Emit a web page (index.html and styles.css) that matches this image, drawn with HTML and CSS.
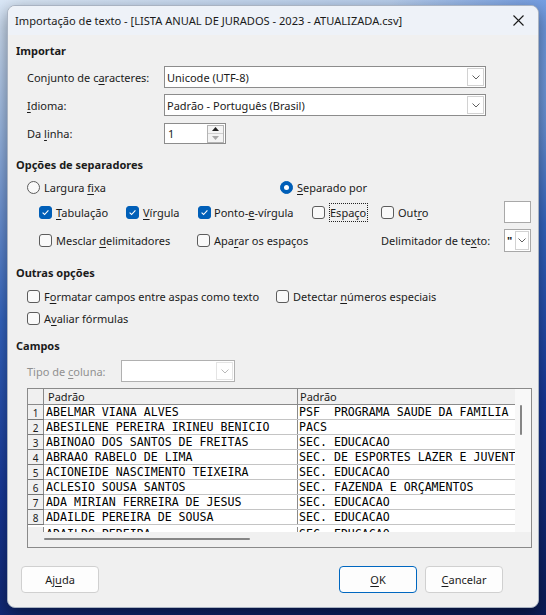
FILE: index.html
```html
<!DOCTYPE html>
<html lang="pt-BR">
<head>
<meta charset="utf-8">
<title>Importação de texto</title>
<link rel="stylesheet" href="styles.css">
</head>
<body>
<div class="window">
  <div class="titlebar">
    <span class="title">Importação de texto - [LISTA ANUAL DE JURADOS - 2023 - ATUALIZADA.csv]</span>
    <span class="close"><svg width="11" height="11" viewBox="0 0 11 11"><path d="M0.5 0.5L10.5 10.5M10.5 0.5L0.5 10.5" stroke="#1a1a1a" stroke-width="1.1" fill="none"/></svg></span>
  </div>
  <div class="body">
    <div class="heading h-import">Importar</div>

    <div class="frow r-charset">
      <span class="flabel">Conjunto de c<u>a</u>racteres:</span>
      <div class="combo combo-wide"><span class="val">Unicode (UTF-8)</span><span class="dd"><svg width="8" height="5" viewBox="0 0 8 5"><path d="M0.5 0.5L4 4L7.5 0.5" fill="none" stroke="#606060"/></svg></span></div>
    </div>
    <div class="frow r-lang">
      <span class="flabel"><u>I</u>dioma:</span>
      <div class="combo combo-wide"><span class="val">Padrão - Português (Brasil)</span><span class="dd"><svg width="8" height="5" viewBox="0 0 8 5"><path d="M0.5 0.5L4 4L7.5 0.5" fill="none" stroke="#606060"/></svg></span></div>
    </div>
    <div class="frow r-line">
      <span class="flabel">Da <u>l</u>inha:</span>
      <div class="spin"><span class="val">1</span>
        <span class="spinbtns">
          <span class="sb up"><svg width="7" height="4" viewBox="0 0 7 4"><path d="M0 4L3.5 0L7 4Z" fill="#202020"/></svg></span>
          <span class="sb down"><svg width="7" height="4" viewBox="0 0 7 4"><path d="M0 0L3.5 4L7 0Z" fill="#a8a8a8"/></svg></span>
        </span>
      </div>
    </div>

    <div class="heading h-sep">Opções de separadores</div>
    <div class="orow r-radio">
      <span class="opt w-largura"><span class="rd"></span><span>Largura <u>f</u>ixa</span></span>
      <span class="opt"><span class="rd on"></span><span><u>S</u>eparado por</span></span>
    </div>
    <div class="orow r-checks">
      <span class="opt w-tab"><span class="cb on"><svg width="11" height="11" viewBox="0 0 11 11"><path d="M2.6 5.6L4.6 7.5L8.4 3.4" fill="none" stroke="#fff" stroke-width="1.1"/></svg></span><span><u>T</u>abulação</span></span>
      <span class="opt w-virg"><span class="cb on"><svg width="11" height="11" viewBox="0 0 11 11"><path d="M2.6 5.6L4.6 7.5L8.4 3.4" fill="none" stroke="#fff" stroke-width="1.1"/></svg></span><span><u>V</u>írgula</span></span>
      <span class="opt w-ponto"><span class="cb on"><svg width="11" height="11" viewBox="0 0 11 11"><path d="M2.6 5.6L4.6 7.5L8.4 3.4" fill="none" stroke="#fff" stroke-width="1.1"/></svg></span><span>Ponto-<u>e</u>-vírgula</span></span>
      <span class="opt w-esp"><span class="cb"></span><span class="focus">Espaço</span></span>
      <span class="opt w-outro"><span class="cb"></span><span>Out<u>r</u>o</span></span>
      <span class="textbox"></span>
    </div>
    <div class="orow r-merge">
      <span class="opt w-mescl"><span class="cb"></span><span>Mesclar <u>d</u>elimitadores</span></span>
      <span class="opt w-aparar"><span class="cb"></span><span>Apa<u>r</u>ar os espaços</span></span>
      <span class="w-delim">Delimitador de te<u>x</u>to:</span>
      <span class="minicombo"><span class="q">"</span><span class="dd"><svg width="8" height="5" viewBox="0 0 8 5"><path d="M0.5 0.5L4 4L7.5 0.5" fill="none" stroke="#606060"/></svg></span></span>
    </div>

    <div class="heading h-other">Outras opções</div>
    <div class="orow r-fmt">
      <span class="opt w-fmt"><span class="cb"></span><span>F<u>o</u>rmatar campos entre aspas como texto</span></span>
      <span class="opt"><span class="cb"></span><span>Detectar <u>n</u>úmeros especiais</span></span>
    </div>
    <div class="orow r-eval">
      <span class="opt"><span class="cb"></span><span>A<u>v</u>aliar fórmulas</span></span>
    </div>

    <div class="heading h-campos">Campos</div>
    <div class="frow r-tipo">
      <span class="tlabel">Tipo de <u>c</u>oluna:</span>
      <div class="combo combo-dis"><span class="dd"><svg width="8" height="5" viewBox="0 0 8 5"><path d="M0.5 0.5L4 4L7.5 0.5" fill="none" stroke="#b8b8b8"/></svg></span></div>
    </div>

    <div class="grid">
      <div class="gmain">
        <div class="grow ghead"><span class="c0"></span><span class="c1">Padrão</span><span class="c2">Padrão</span></div>
        <div class="grow"><span class="c0">1</span><span class="c1">ABELMAR VIANA ALVES</span><span class="c2">PSF  PROGRAMA SAUDE DA FAMILIA</span></div>
        <div class="grow"><span class="c0">2</span><span class="c1">ABESILENE PEREIRA IRINEU BENICIO</span><span class="c2">PACS</span></div>
        <div class="grow"><span class="c0">3</span><span class="c1">ABINOAO DOS SANTOS DE FREITAS</span><span class="c2">SEC. EDUCACAO</span></div>
        <div class="grow"><span class="c0">4</span><span class="c1">ABRAAO RABELO DE LIMA</span><span class="c2">SEC. DE ESPORTES LAZER E JUVENT</span></div>
        <div class="grow"><span class="c0">5</span><span class="c1">ACIONEIDE NASCIMENTO TEIXEIRA</span><span class="c2">SEC. EDUCACAO</span></div>
        <div class="grow"><span class="c0">6</span><span class="c1">ACLESIO SOUSA SANTOS</span><span class="c2">SEC. FAZENDA E ORÇAMENTOS</span></div>
        <div class="grow"><span class="c0">7</span><span class="c1">ADA MIRIAN FERREIRA DE JESUS</span><span class="c2">SEC. EDUCACAO</span></div>
        <div class="grow"><span class="c0">8</span><span class="c1">ADAILDE PEREIRA DE SOUSA</span><span class="c2">SEC. EDUCACAO</span></div>
        <div class="grow gpart"><span class="c0"></span><span class="c1">ADAILDO PEREIRA</span><span class="c2">SEC. EDUCACAO</span></div>
      </div>
      <div class="vscroll"><span class="vthumb"></span></div>
      <div class="hscroll"><span class="hthumb"></span></div>
      <div class="corner"></div>
    </div>

    <div class="buttons">
      <span class="btn">Aj<u>u</u>da</span>
      <span class="spacer"></span>
      <span class="btn btn-ok"><u>O</u>K</span>
      <span class="btn"><u>C</u>ancelar</span>
    </div>
  </div>
</div>
</body>
</html>
```

FILE: styles.css
```css
* { box-sizing: border-box; }
html, body { margin: 0; padding: 0; }
body {
  width: 546px;
  height: 615px;
  overflow: hidden;
  font-family: "Noto Sans", sans-serif;
  font-size: 11px;
  color: #1b1b1b;
  background:
    radial-gradient(ellipse 300px 200px at 600px 20px, #5f8fe0 0%, rgba(95,143,224,0) 70%),
    linear-gradient(170deg, #dbe8f7 0%, #9dbbe6 18%, #3567c4 45%, #17389a 70%, #0b1c58 100%);
}
u { text-decoration: underline; text-underline-offset: 2px; }

.window {
  margin: 5px 0 0 7px;
  width: 532px;
  height: 603px;
  background: #f0f0f0;
  border: 1px solid #a9b3c2;
  border-radius: 8px;
  overflow: hidden;
  box-shadow: 0 6px 18px rgba(0, 0, 0, 0.45);
  display: flex;
  flex-direction: column;
}
.titlebar {
  height: 29px;
  flex: none;
  background: #eef2f8;
  display: flex;
  align-items: center;
  padding-left: 7px;
  font-size: 11.1px;
  color: #1a1a1a;
}
.close { margin-left: auto; margin-right: 14px; display: flex; }

.body {
  flex: 1;
  display: flex;
  flex-direction: column;
  padding-left: 8px;
}
.heading { font-weight: bold; height: 16px; line-height: 16px; }
.h-import { margin-top: 8px; }
.h-sep { margin-top: 13px; }
.h-other { margin-top: 13px; }
.h-campos { margin-top: 12px; }

.frow { display: flex; align-items: center; margin-left: 11px; }
.flabel { width: 137px; }
.r-charset { margin-top: 7px; height: 22px; }
.r-lang { margin-top: 6px; height: 22px; }
.r-line { margin-top: 7px; height: 21px; }

.combo {
  height: 22px;
  border: 1px solid #8c8c8c;
  background: #fff;
  display: flex;
  align-items: center;
  padding-left: 2px;
}
.combo-wide { width: 322px; }
.combo .dd {
  margin-left: auto;
  margin-right: 1px;
  width: 17px;
  height: 18px;
  border: 1px solid #d2d2d2;
  background: #fff;
  display: flex;
  align-items: center;
  justify-content: center;
}
.spin {
  width: 62px;
  height: 21px;
  border: 1px solid #8c8c8c;
  background: #fff;
  display: flex;
  align-items: center;
  padding-left: 3px;
}
.spinbtns {
  margin-left: auto;
  margin-right: 1px;
  width: 17px;
  height: 18px;
  border: 1px solid #b4b4b4;
  display: flex;
  flex-direction: column;
}
.sb { flex: 1; display: flex; align-items: center; justify-content: center; background: #f4f4f4; }
.sb.up { border-bottom: 1px solid #d0d0d0; }

.orow { display: flex; align-items: center; }
.opt { display: flex; align-items: center; gap: 4px; }
.r-radio { margin-top: 6px; height: 16px; margin-left: 11px; }
.r-checks { margin-top: 6px; height: 22px; margin-left: 23px; }
.r-merge { margin-top: 6px; height: 23px; margin-left: 23px; }
.r-fmt { margin-top: 7px; height: 16px; margin-left: 11px; }
.r-eval { margin-top: 6px; height: 16px; margin-left: 11px; }

.w-largura { width: 253px; }
.w-tab { width: 87px; }
.w-virg { width: 72px; }
.w-ponto { width: 114px; gap: 3px; }
.w-esp { width: 69px; }
.w-outro { width: 123px; }
.w-mescl { width: 158px; }
.w-aparar { width: 184px; }
.w-delim { width: 123px; }
.w-fmt { width: 249px; }

.cb {
  width: 13px;
  height: 13px;
  flex: none;
  border: 1px solid #5c5c5c;
  border-radius: 3px;
  background: #f9f9f9;
  display: flex;
  align-items: center;
  justify-content: center;
}
.cb.on { background: #005fb8; border-color: #005fb8; }
.rd {
  width: 13px;
  height: 13px;
  flex: none;
  border: 1px solid #5c5c5c;
  border-radius: 50%;
  background: #f9f9f9;
  display: flex;
  align-items: center;
  justify-content: center;
}
.rd.on { background: #005fb8; border-color: #005fb8; }
.rd.on::after {
  content: "";
  width: 5px;
  height: 5px;
  border-radius: 50%;
  background: #fff;
}
.focus { border: 1px dotted #222; padding: 2px 1px 2px 0; line-height: 13px; }
.textbox {
  width: 27px;
  height: 22px;
  border: 1px solid #a8a8a8;
  background: #fff;
}
.minicombo {
  width: 27px;
  height: 23px;
  border: 1px solid #a8a8a8;
  background: #fff;
  display: flex;
  align-items: center;
}
.minicombo .q { width: 10px; padding-left: 2px; font-weight: bold; }
.minicombo .dd {
  width: 14px;
  height: 19px;
  border: 1px solid #d2d2d2;
  display: flex;
  align-items: center;
  justify-content: center;
}

.r-tipo { margin-top: 6px; height: 22px; }
.tlabel { width: 94px; color: #909090; }
.combo-dis { width: 114px; border-color: #b0b0b0; }
.combo-dis .dd { border-color: #e4e4e4; }

.grid {
  margin-top: 6px;
  margin-left: 11px;
  width: 505px;
  height: 160px;
  border: 1px solid #8a8a8a;
  background: #f0f0f0;
  display: grid;
  grid-template-columns: 487px 16px;
  grid-template-rows: 143px 15px;
}
.gmain { overflow: hidden; background: #fff; }
.grow {
  display: flex;
  height: 15px;
  border-bottom: 1px solid #c4c4c4;
  font-family: "DejaVu Sans Mono", monospace;
  font-size: 11.6px;
  line-height: 14px;
  color: #000;
  white-space: pre;
}
.grow .c0 {
  width: 16px;
  height: 14px;
  flex: none;
  overflow: hidden;
  background: #f0f0f0;
  border-right: 1px solid #8a8a8a;
  font-family: "Noto Sans", sans-serif;
  font-size: 10px;
  line-height: 12px;
  padding-top: 2px;
  text-align: center;
  color: #1b1b1b;
}
.grow .c1 { width: 254px; flex: none; overflow: hidden; border-right: 1px solid #8a8a8a; padding-left: 2px; }
.grow .c2 { flex: 1; overflow: hidden; padding-left: 1px; }
.grow:not(.ghead) .c0 { box-shadow: 0 1px 0 #777; }
.gpart { padding-top: 2px; }
.ghead {
  height: 16px;
  background: #f0f0f0;
  border-bottom: 1px solid #8a8a8a;
  font-family: "Noto Sans", sans-serif;
  font-size: 11px;
  line-height: 15px;
  color: #1b1b1b;
}
.ghead .c0 { height: 15px; }
.ghead .c1 { padding-left: 4px; }
.ghead .c2 { padding-left: 2px; }
.vscroll { background: #f8f8f8; position: relative; }
.vthumb {
  position: absolute;
  left: 5px;
  top: 16px;
  width: 2px;
  height: 30px;
  border-radius: 1px;
  background: #858585;
}
.hscroll { background: #f0f0f0; position: relative; }
.hthumb {
  position: absolute;
  left: 16px;
  top: 6px;
  width: 206px;
  height: 2px;
  border-radius: 1px;
  background: #858585;
}
.corner { background: #f0f0f0; }

.buttons {
  margin-top: 18px;
  margin-left: 5px;
  margin-right: 35px;
  height: 27px;
  display: flex;
  gap: 8px;
}
.spacer { flex: 1; }
.btn {
  width: 78px;
  height: 27px;
  border: 1px solid #d0d0d0;
  border-radius: 4px;
  background: #fdfdfd;
  display: flex;
  align-items: center;
  justify-content: center;
}
.btn-ok { border-color: #0067c0; }
```
